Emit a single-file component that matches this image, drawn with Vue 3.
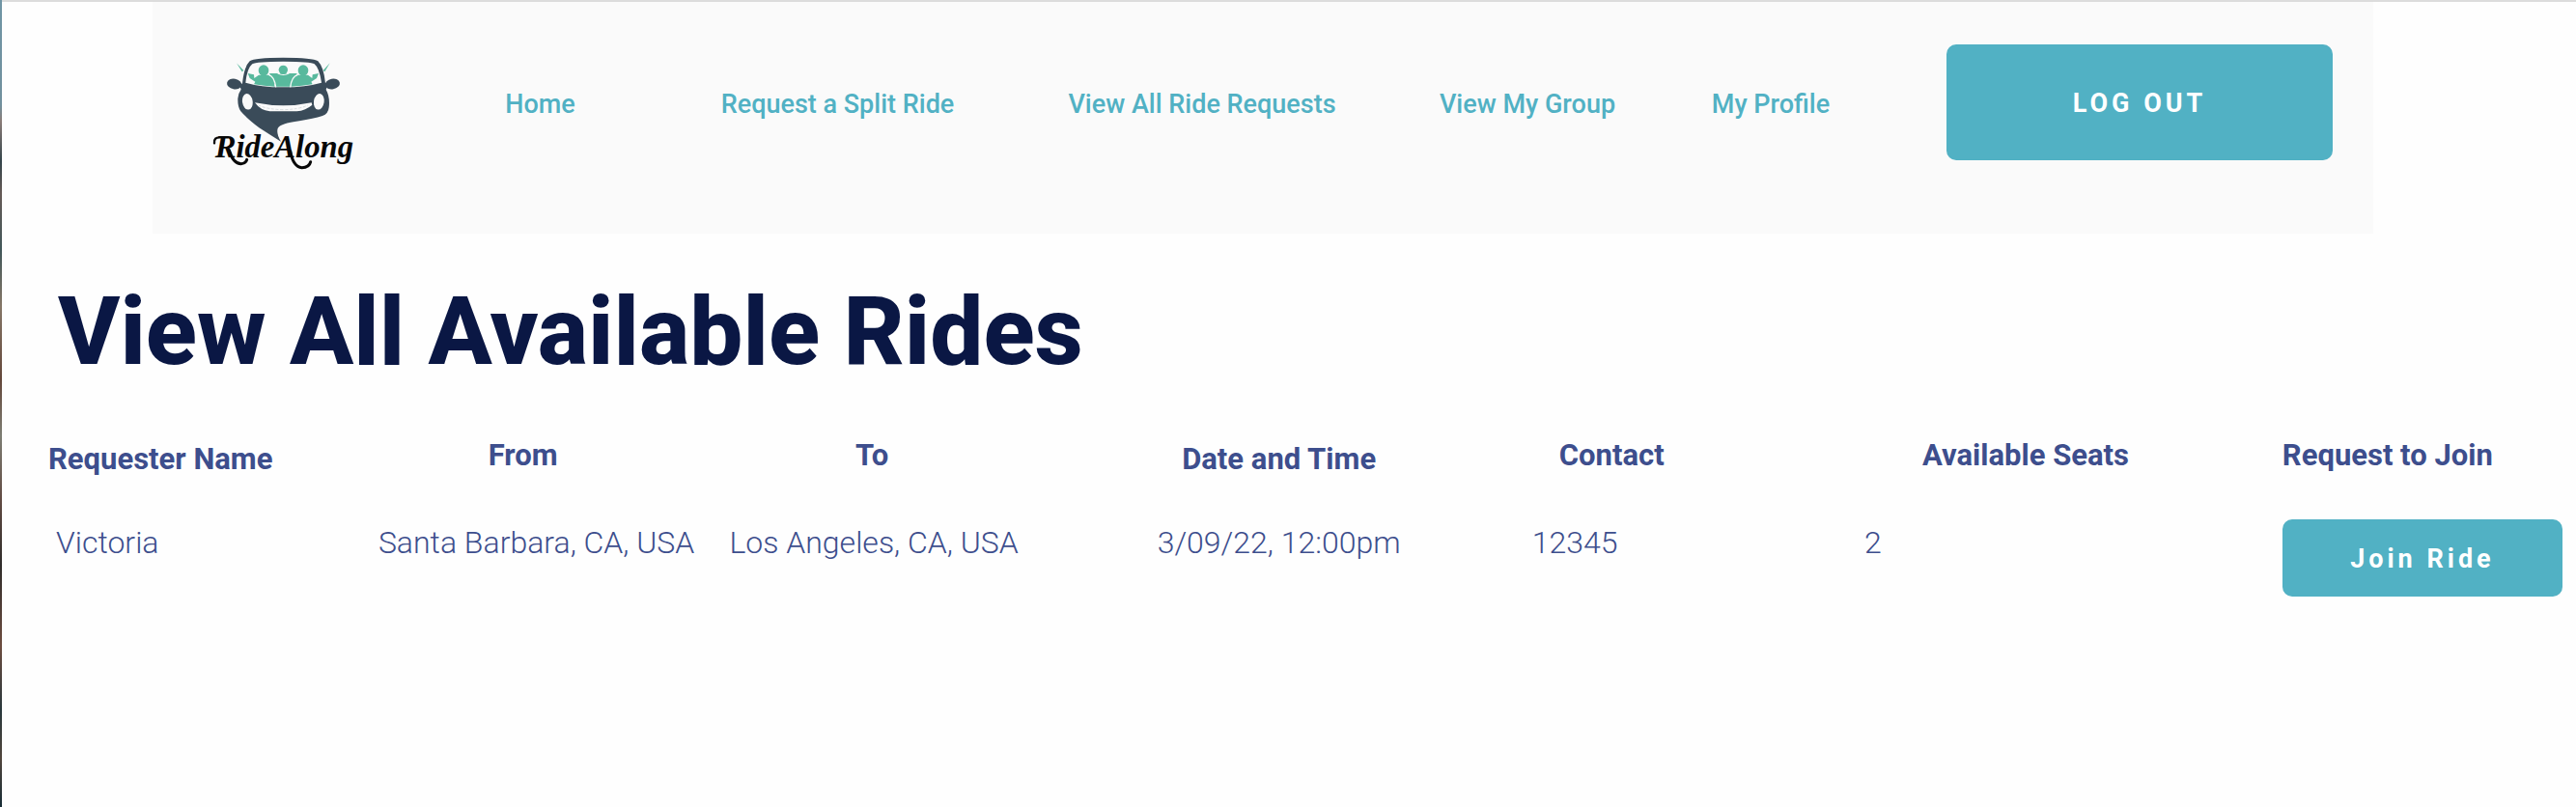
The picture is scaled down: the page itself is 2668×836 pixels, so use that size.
<script setup>
const links = ['Home', 'Request a Split Ride', 'View All Ride Requests', 'View My Group', 'My Profile']

const columns = [
  { key: 'name', label: 'Requester Name' },
  { key: 'from', label: 'From' },
  { key: 'to', label: 'To' },
  { key: 'time', label: 'Date and Time' },
  { key: 'contact', label: 'Contact' },
  { key: 'seats', label: 'Available Seats' },
  { key: 'join', label: 'Request to Join' },
]

const rides = [
  {
    name: 'Victoria',
    from: 'Santa Barbara, CA, USA',
    to: 'Los Angeles, CA, USA',
    time: '3/09/22, 12:00pm',
    contact: '12345',
    seats: '2',
  },
]
</script>

<template>
  <div class="page">
    <header class="site-header">
      <a class="brand" href="#" aria-label="RideAlong">
        <svg class="logo" viewBox="0 0 570 450" aria-hidden="true">
          <g fill="#3a4b59">
            <ellipse cx="128" cy="141" rx="23" ry="16" transform="rotate(10 128 141)" />
            <ellipse cx="433" cy="141" rx="23" ry="16" transform="rotate(-10 433 141)" />
            <path d="M145 146 L153 139 Q158 88 176 70 Q190 59 280 59 Q372 59 388 70 Q406 88 411 139 L418 146 L413 158 Q426 182 422 214 Q420 234 402 240 Q374 249 330 256 Q270 264 263 279 Q258 296 273 320 Q240 300 205 277 Q166 247 148 226 Q138 212 139 186 Q140 170 149 158 Z" />
          </g>
          <path fill="#fafafa" d="M163 137 Q168 91 184 79 Q196 71 280 71 Q366 71 377 79 Q392 91 399 137 Q350 151 280 151 Q210 151 163 137 Z" />
          <g fill="#58b99d">
            <path d="M135 76 L157 99 L152 103 Z" />
            <path d="M425 76 L404 99 L409 103 Z" />
            <path d="M237 108 H323 L303 149 H258 Z" />
            <path d="M170 108 L189 112 L190 123 L204 113 H236 Q251 119 254 149 Q221 148 189 142 L193 134 L176 123 Z" />
            <path d="M390 108 L371 112 L370 123 L357 113 H325 Q309 119 304 149 Q340 148 371 142 L367 134 L384 123 Z" />
          </g>
          <g fill="none" stroke="#fafafa" stroke-width="4">
            <path d="M235 112 Q253 118 257 151" />
            <path d="M325 112 Q306 118 302 151" />
            <path d="M263 108 Q280 116 298 108" />
          </g>
          <g fill="#58b99d">
            <ellipse cx="219" cy="99" rx="16" ry="17" />
            <ellipse cx="280" cy="97" rx="14" ry="14" />
            <ellipse cx="342" cy="99" rx="16" ry="17" />
          </g>
          <g fill="#fafafa">
            <ellipse cx="169" cy="196" rx="16" ry="25" transform="rotate(-8 169 196)" />
            <ellipse cx="391" cy="196" rx="16" ry="25" transform="rotate(8 391 196)" />
            <path d="M192 199 Q236 208 280 208 Q326 208 368 199 L370 206 Q350 223 322 226 H238 Q209 223 192 199 Z" />
          </g>
          <path d="M203 207 Q230 220 280 221 Q330 220 356 207" fill="none" stroke="#c5cbcf" stroke-width="2" stroke-dasharray="9 5" />
          <text class="wordmark" x="68" y="370">RideAlong</text>
          <g fill="none" stroke="#080808" stroke-linecap="round">
            <path d="M66 325 Q64 306 84 307 H108" stroke-width="7" />
            <path d="M112 348 Q124 388 149 389 Q164 388 167 376" stroke-width="9" />
            <path d="M302 350 Q311 398 338 401 Q361 401 365 383" stroke-width="9" />
          </g>
        </svg>
      </a>
      <nav class="nav">
        <a v-for="link in links" :key="link" href="#">{{ link }}</a>
      </nav>
      <div class="account">
        <button class="button logout" type="button">LOG OUT</button>
      </div>
    </header>

    <main>
      <h1>View All Available Rides</h1>
      <table>
        <colgroup>
          <col v-for="column in columns" :key="column.key" :class="'col-' + column.key">
        </colgroup>
        <thead>
          <tr>
            <th v-for="column in columns" :key="column.key" :class="column.key" scope="col">{{ column.label }}</th>
          </tr>
        </thead>
        <tbody>
          <tr v-for="ride in rides" :key="ride.name">
            <td v-for="column in columns" :key="column.key" :class="column.key">
              <button v-if="column.key === 'join'" class="button join-button" type="button">Join Ride</button>
              <template v-else>{{ ride[column.key] }}</template>
            </td>
          </tr>
        </tbody>
      </table>
    </main>
  </div>
</template>

<style>
body {
  margin: 0;
  background: #fefefe;
}
</style>

<style scoped>
.page {
  position: relative;
  min-height: 100vh;
  box-sizing: border-box;
  border-top: 2px solid #dcdcdc;
  font-family: Roboto, "Liberation Sans", sans-serif;
  color: #3d4e8d;
}

/* sliver of the window behind */
.page::before {
  content: "";
  position: absolute;
  top: -2px;
  bottom: 0;
  left: 0;
  width: 2px;
  background: linear-gradient(#6f95a5 0%, #71909d 13%, #8a7c78 15%, #35454b 20%, #665b57 24%, #42585a 31%, #857667 38%, #64483b 47%, #7d7d73 54%, #614b43 62%, #302d2b 70%, #6d4d40 80%, #29383d 88%, #51463d 94%, #172c35 100%);
}

.site-header {
  display: grid;
  grid-template-columns: minmax(0, 262fr) minmax(0, 1538fr) minmax(0, 500fr);
  margin: 0 210px 0 158px;
  min-height: 240px;
  background: #fafafa;
}

.brand {
  padding: 38px 0 0 42px;
}

.logo {
  display: block;
  width: 190px;
  height: 150px;
}

.wordmark {
  font-family: "Liberation Serif", serif;
  font-size: 98px;
  font-weight: 700;
  font-style: italic;
  fill: #080808;
}

.nav {
  display: grid;
  grid-template-columns: 279fr 337fr 418fr 256fr 248fr;
  align-items: start;
  padding-top: 85px;
}

.nav a {
  text-align: center;
  white-space: nowrap;
  font-size: 27px;
  line-height: 42px;
  font-weight: 500;
  color: #51b1c4;
  text-decoration: none;
}

.account {
  padding: 44px 42px 0 58px;
}

.button {
  display: block;
  width: 100%;
  padding: 2px 0 0;
  border: 0;
  border-radius: 10px;
  background: #51b1c4;
  color: #fff;
  font-family: inherit;
  font-size: 27px;
  font-weight: 700;
  letter-spacing: 4px;
}

.logout {
  height: 120px;
}

h1 {
  margin: 42px 0 0 60px;
  font-size: 98px;
  line-height: 120px;
  font-weight: 800;
  color: #0a1744;
}

table {
  width: 100%;
  margin-top: 44px;
  border-collapse: collapse;
  table-layout: fixed;
}

.col-name { width: 13.4%; }
.col-from { width: 13.8%; }
.col-to { width: 13.3%; }
.col-time { width: 18.3%; }
.col-contact { width: 13.2%; }
.col-seats { width: 16.6%; }
.col-join { width: 11.4%; }

th,
td {
  padding: 0;
  text-align: left;
  white-space: nowrap;
  font-size: 31px;
}

th {
  height: 48px;
  line-height: 40px;
  font-weight: 700;
  vertical-align: middle;
}

th.name,
th.time {
  vertical-align: bottom;
}

td {
  padding-top: 42px;
  line-height: 48px;
  font-size: 32px;
  font-weight: 300;
  vertical-align: top;
}

th.name { padding-left: 50px; }
td.name { padding-left: 58px; }
.from, .to, .time { text-align: center; }
td.from { padding-left: 28px; }
td.to { padding-left: 4px; }
th.contact { padding-left: 46px; }
td.contact { padding-left: 18px; }
th.seats { padding-left: 70px; }
td.seats { padding-left: 10px; }
td.join { padding-right: 14px; }

.join-button {
  height: 80px;
}
</style>
